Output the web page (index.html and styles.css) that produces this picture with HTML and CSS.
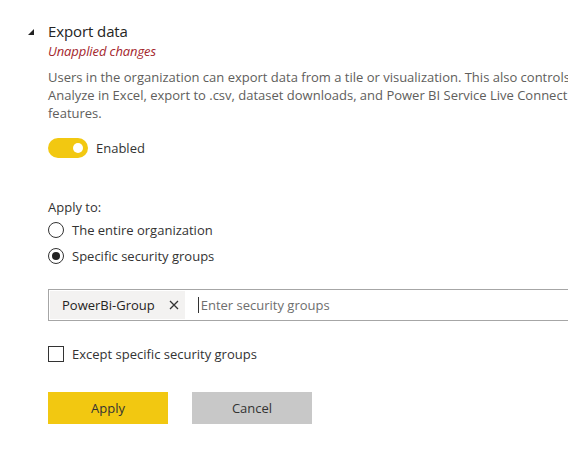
FILE: index.html
```html
<!DOCTYPE html>
<html>
<head>
<meta charset="utf-8">
<link rel="stylesheet" href="styles.css">
</head>
<body>
<div class="section">
  <div class="header">
    <svg class="caret" width="8" height="8" viewBox="0 0 8 8"><polygon points="7,1 7,7 1,7" fill="#222"/></svg>
    <div class="title">Export data</div>
  </div>
  <div class="body">
    <div class="unapplied">Unapplied changes</div>
    <p class="desc">Users in the organization can export data from a tile or visualization. This also controls Analyze in Excel, export to .csv, dataset downloads, and Power BI Service Live Connect features.</p>
    <div class="toggle-row">
      <span class="toggle"><span class="knob"></span></span>
      <span class="toggle-label">Enabled</span>
    </div>
    <div class="apply-label">Apply to:</div>
    <div class="radio-row first"><span class="radio"></span><span>The entire organization</span></div>
    <div class="radio-row"><span class="radio checked"></span><span>Specific security groups</span></div>
    <div class="picker">
      <span class="tag">PowerBi-Group <svg class="x" width="10" height="10" viewBox="0 0 10 10"><path d="M1 1L9 9M9 1L1 9" stroke="#333" stroke-width="1.3"/></svg></span>
      <span class="caret-line"></span>
      <span class="placeholder">Enter security groups</span>
    </div>
    <div class="check-row"><span class="checkbox"></span><span>Except specific security groups</span></div>
    <div class="buttons">
      <button class="btn primary">Apply</button>
      <button class="btn secondary">Cancel</button>
    </div>
  </div>
</div>
</body>
</html>
```
FILE: styles.css
```css
* { box-sizing: border-box; }
html, body { margin: 0; padding: 0; background: #fff; overflow: hidden; }
body {
  font-family: "Open Sans", "Noto Sans", sans-serif;
  color: #333;
  width: 568px;
  height: 462px;
}
.section { padding: 21px 0 0 27px; width: 568px; overflow: hidden; }
.header { display: flex; align-items: center; }
.caret { margin-top: 1px; }
.title { margin-left: 13px; font-size: 15px; color: #252423; line-height: 20px; letter-spacing: -0.1px; }
.body { padding-left: 21px; width: 600px; }
.unapplied { font-style: italic; font-size: 13px; color: #a4262c; line-height: 18px; margin-top: 1px; letter-spacing: -0.1px; }
.desc { margin: 8px 0 0; font-size: 13px; line-height: 18px; color: #605e5c; width: 550px; }
.toggle-row { display: flex; align-items: center; margin-top: 16px; height: 20px; }
.toggle { width: 40px; height: 20px; border-radius: 10px; background: #f2c811; position: relative; display: inline-block; }
.knob { position: absolute; right: 5px; top: 5px; width: 10px; height: 10px; border-radius: 50%; background: #fff; }
.toggle-label { margin-left: 8px; font-size: 13px; color: #333; }
.apply-label { margin-top: 40px; font-size: 13px; line-height: 18px; color: #333; }
.radio-row { display: flex; align-items: center; height: 26px; font-size: 13px; color: #333; }
.radio-row.first { margin-top: 1px; }
.radio { width: 16px; height: 16px; border: 1px solid #333; border-radius: 50%; margin-right: 8px; position: relative; }
.radio.checked::after { content: ""; position: absolute; left: 3px; top: 3px; width: 8px; height: 8px; border-radius: 50%; background: #222; }
.picker { margin-top: 20px; height: 32px; border: 1px solid #a6a6a6; display: flex; align-items: center; padding: 1px; width: 560px; }
.tag { background: #f3f2f1; height: 28px; display: flex; align-items: center; padding: 0 6px 0 12px; font-size: 13px; color: #252423; }
.tag .x { margin-left: 14px; }
.caret-line { width: 1px; height: 16px; background: #333; margin-left: 13px; }
.placeholder { font-size: 13px; color: #6e6e6e; margin-left: 2px; }
.check-row { display: flex; align-items: center; margin-top: 24px; font-size: 13px; color: #333; height: 18px; }
.checkbox { width: 16px; height: 16px; border: 1px solid #333; margin-right: 8px; }
.buttons { display: flex; gap: 24px; margin-top: 29px; }
.btn { width: 120px; height: 32px; border: none; font-family: inherit; font-size: 13px; color: #333; }
.btn.primary { background: #f2c811; }
.btn.secondary { background: #c8c8c8; }
```
